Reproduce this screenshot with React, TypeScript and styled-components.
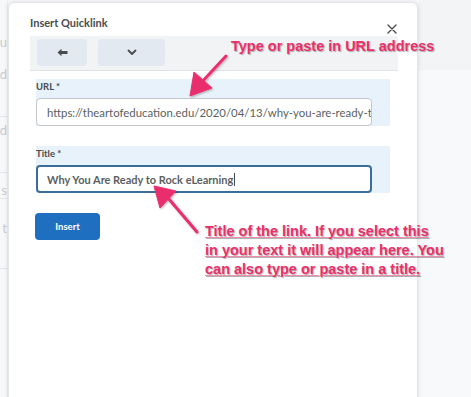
import styled, { createGlobalStyle } from "styled-components";

const GlobalStyle = createGlobalStyle`
  html, body {
    margin: 0;
    padding: 0;
    background: #f8f9fb;
    overflow: hidden;
  }
  * {
    box-sizing: border-box;
  }
`;

const PINK = "#ea2f6d";

function App() {
  return (
    <>
      <GlobalStyle />
      <Page>
        <Backdrop>
          <Ghost top={34}>u</Ghost>
          <Ghost top={66}>d</Ghost>
          <GhostLine top={116} />
          <Ghost top={122}>rd</Ghost>
          <GhostLine top={172} />
          <Ghost top={182}>s</Ghost>
          <GhostLine top={198} />
          <Ghost top={220}>t</Ghost>
          <GhostLine top={268} />
        </Backdrop>
        <Dialog>
          <Header>
            <DialogTitle>Insert Quicklink</DialogTitle>
            <Close aria-label="close">
              <svg width="10" height="10" viewBox="0 0 10 10">
                <path d="M1 1 L9 9 M9 1 L1 9" stroke="#494c4e" strokeWidth="1.4" strokeLinecap="round" />
              </svg>
            </Close>
          </Header>
          <Toolbar>
            <ToolButton width={50}>
              <svg width="11" height="9" viewBox="0 0 11 9">
                <path d="M0.5 4.5 L4.5 0.8 L4.5 3 L10.5 3 L10.5 6 L4.5 6 L4.5 8.2 Z" fill="#494c4e" />
              </svg>
            </ToolButton>
            <ToolButton width={67}>
              <svg width="10" height="7" viewBox="0 0 10 7">
                <path d="M1.5 1.5 L5 5 L8.5 1.5" stroke="#494c4e" strokeWidth="1.8" fill="none" strokeLinecap="round" strokeLinejoin="round" />
              </svg>
            </ToolButton>
          </Toolbar>
          <Body>
            <Field>
              <Label>URL *</Label>
              <Input>https://theartofeducation.edu/2020/04/13/why-you-are-ready-to-rock-elearning/</Input>
            </Field>
            <Field>
              <Label>Title *</Label>
              <Input focused>
                Why You Are Ready to Rock eLearning<Caret />
              </Input>
            </Field>
            <InsertButton>Insert</InsertButton>
          </Body>

          <Callout top={34} left={222} size={14.5}>
            Type or paste in URL address
          </Callout>
          <Callout top={219} left={196} size={14.5} underline>
            Title of the link. If you select this
            <br />
            in your text it will appear here. You
            <br />
            can also type or paste in a title.
          </Callout>
          <ArrowLayer width="409" height="397" viewBox="0 0 409 397">
            <defs>
              <filter id="sh" x="-20%" y="-20%" width="140%" height="140%">
                <feDropShadow dx="1" dy="1" stdDeviation="0.8" floodColor="#000" floodOpacity="0.3" />
              </filter>
            </defs>
            <g fill={PINK} stroke={PINK} filter="url(#sh)">
              <path d="M218 56 L192 84" strokeWidth="3" strokeLinecap="round" fill="none" />
              <path d="M182 96 L186 72 L204 88 Z" strokeWidth="1" strokeLinejoin="round" />
              <path d="M189 232 L160 198" strokeWidth="3" strokeLinecap="round" fill="none" />
              <path d="M146 186 L168 191 L152 208 Z" strokeWidth="1" strokeLinejoin="round" />
            </g>
          </ArrowLayer>
        </Dialog>
        <Side>
          <SideBand />
        </Side>
      </Page>
    </>
  );
}
export default App;

const Page = styled.div`
  display: flex;
  width: 471px;
  height: 397px;
  overflow: hidden;
`;

const Backdrop = styled.div`
  position: relative;
  width: 8px;
  flex-shrink: 0;
  overflow: hidden;
  background: #f7f8fa;
  border-right: 1px solid #eceef1;
`;

const Ghost = styled.span<{ top: number }>`
  position: absolute;
  top: ${(p) => p.top}px;
  right: 0;
  font-family: Lato, "Liberation Sans", sans-serif;
  font-size: 13px;
  color: #c9ccd0;
`;

const GhostLine = styled.div<{ top: number }>`
  position: absolute;
  top: ${(p) => p.top}px;
  left: 0;
  right: 0;
  height: 1px;
  background: #e3e5e8;
`;

const Dialog = styled.div`
  position: relative;
  width: 410px;
  flex-shrink: 0;
  margin-top: 2px;
  height: 420px;
  background: #ffffff;
  border: 1px solid #e3e5e8;
  border-radius: 6px 6px 0 0;
  box-shadow: 0 0 5px rgba(0, 0, 0, 0.12);
`;

const Header = styled.div`
  display: flex;
  align-items: flex-end;
  justify-content: space-between;
  height: 33px;
  padding: 0 18px 4px 21px;
`;

const DialogTitle = styled.h2`
  margin: 0 0 3px;
  font-family: Lato, "Liberation Sans", sans-serif;
  font-size: 11px;
  font-weight: 700;
  color: #494c4e;
`;

const Close = styled.button`
  display: flex;
  align-items: center;
  justify-content: center;
  width: 14px;
  height: 14px;
  padding: 0;
  margin-bottom: -4px;
  border: none;
  background: transparent;
`;

const Toolbar = styled.div`
  display: flex;
  gap: 11px;
  height: 35px;
  margin: 0 19px 0 21px;
  padding: 3px 7px;
  background: #f2f3f5;
  border-bottom: 1px solid #dfe2e6;
`;

const ToolButton = styled.button<{ width: number }>`
  display: flex;
  align-items: center;
  justify-content: center;
  width: ${(p) => p.width}px;
  height: 27px;
  padding: 0;
  border: none;
  border-radius: 4px;
  background: #e3e9f0;
`;

const Body = styled.div`
  display: flex;
  flex-direction: column;
  align-items: flex-start;
  gap: 20px;
  padding: 8px 0 0 27px;
`;

const Field = styled.div`
  display: flex;
  flex-direction: column;
  gap: 6px;
  width: 354px;
  padding: 2px 18px 0 0;
  background: #e8f2fa;
`;

const Label = styled.label`
  height: 11px;
  font-family: Lato, "Liberation Sans", sans-serif;
  font-size: 9.5px;
  font-weight: 700;
  line-height: 11px;
  color: #494c4e;
`;

const Input = styled.div<{ focused?: boolean }>`
  display: flex;
  align-items: center;
  height: 28px;
  padding: 0 ${(p) => (p.focused ? 9 : 10)}px;
  background: #ffffff;
  border: ${(p) => (p.focused ? "2px solid #3a6e99" : "1px solid #c3c7cb")};
  border-radius: 4px;
  font-family: Lato, "Liberation Sans", sans-serif;
  font-size: ${(p) => (p.focused ? 11 : 11.4)}px;
  font-weight: ${(p) => (p.focused ? 700 : 400)};
  color: #5b5f62;
  white-space: nowrap;
  overflow: hidden;
`;

const Caret = styled.span`
  display: inline-block;
  width: 1px;
  height: 13px;
  margin-left: 1px;
  background: #494c4e;
`;

const InsertButton = styled.button`
  width: 65px;
  height: 27px;
  margin-left: -1px;
  border: none;
  border-radius: 4px;
  background: #1e6fc0;
  font-family: Lato, "Liberation Sans", sans-serif;
  font-size: 9.5px;
  font-weight: 700;
  color: #ffffff;
`;

const Callout = styled.div<{
  top: number;
  left: number;
  size: number;
  spacing?: number;
  underline?: boolean;
}>`
  position: absolute;
  top: ${(p) => p.top}px;
  left: ${(p) => p.left}px;
  font-family: "Liberation Sans", Arial, sans-serif;
  font-size: ${(p) => p.size}px;
  letter-spacing: ${(p) => p.spacing ?? 0}px;
  font-weight: 700;
  line-height: 19px;
  color: ${PINK};
  white-space: nowrap;
  text-decoration: ${(p) => (p.underline ? "underline" : "none")};
  text-decoration-color: rgba(234, 47, 109, 0.55);
  text-decoration-thickness: 1px;
  text-shadow: 1px 1px 1px rgba(0, 0, 0, 0.3);
  z-index: 2;
`;

const ArrowLayer = styled.svg`
  position: absolute;
  top: -3px;
  left: -1px;
  pointer-events: none;
  z-index: 3;
`;

const Side = styled.div`
  flex: 1;
  background: #f8f9fb;
`;

const SideBand = styled.div`
  height: 70px;
  background: #f3f4f6;
`;
